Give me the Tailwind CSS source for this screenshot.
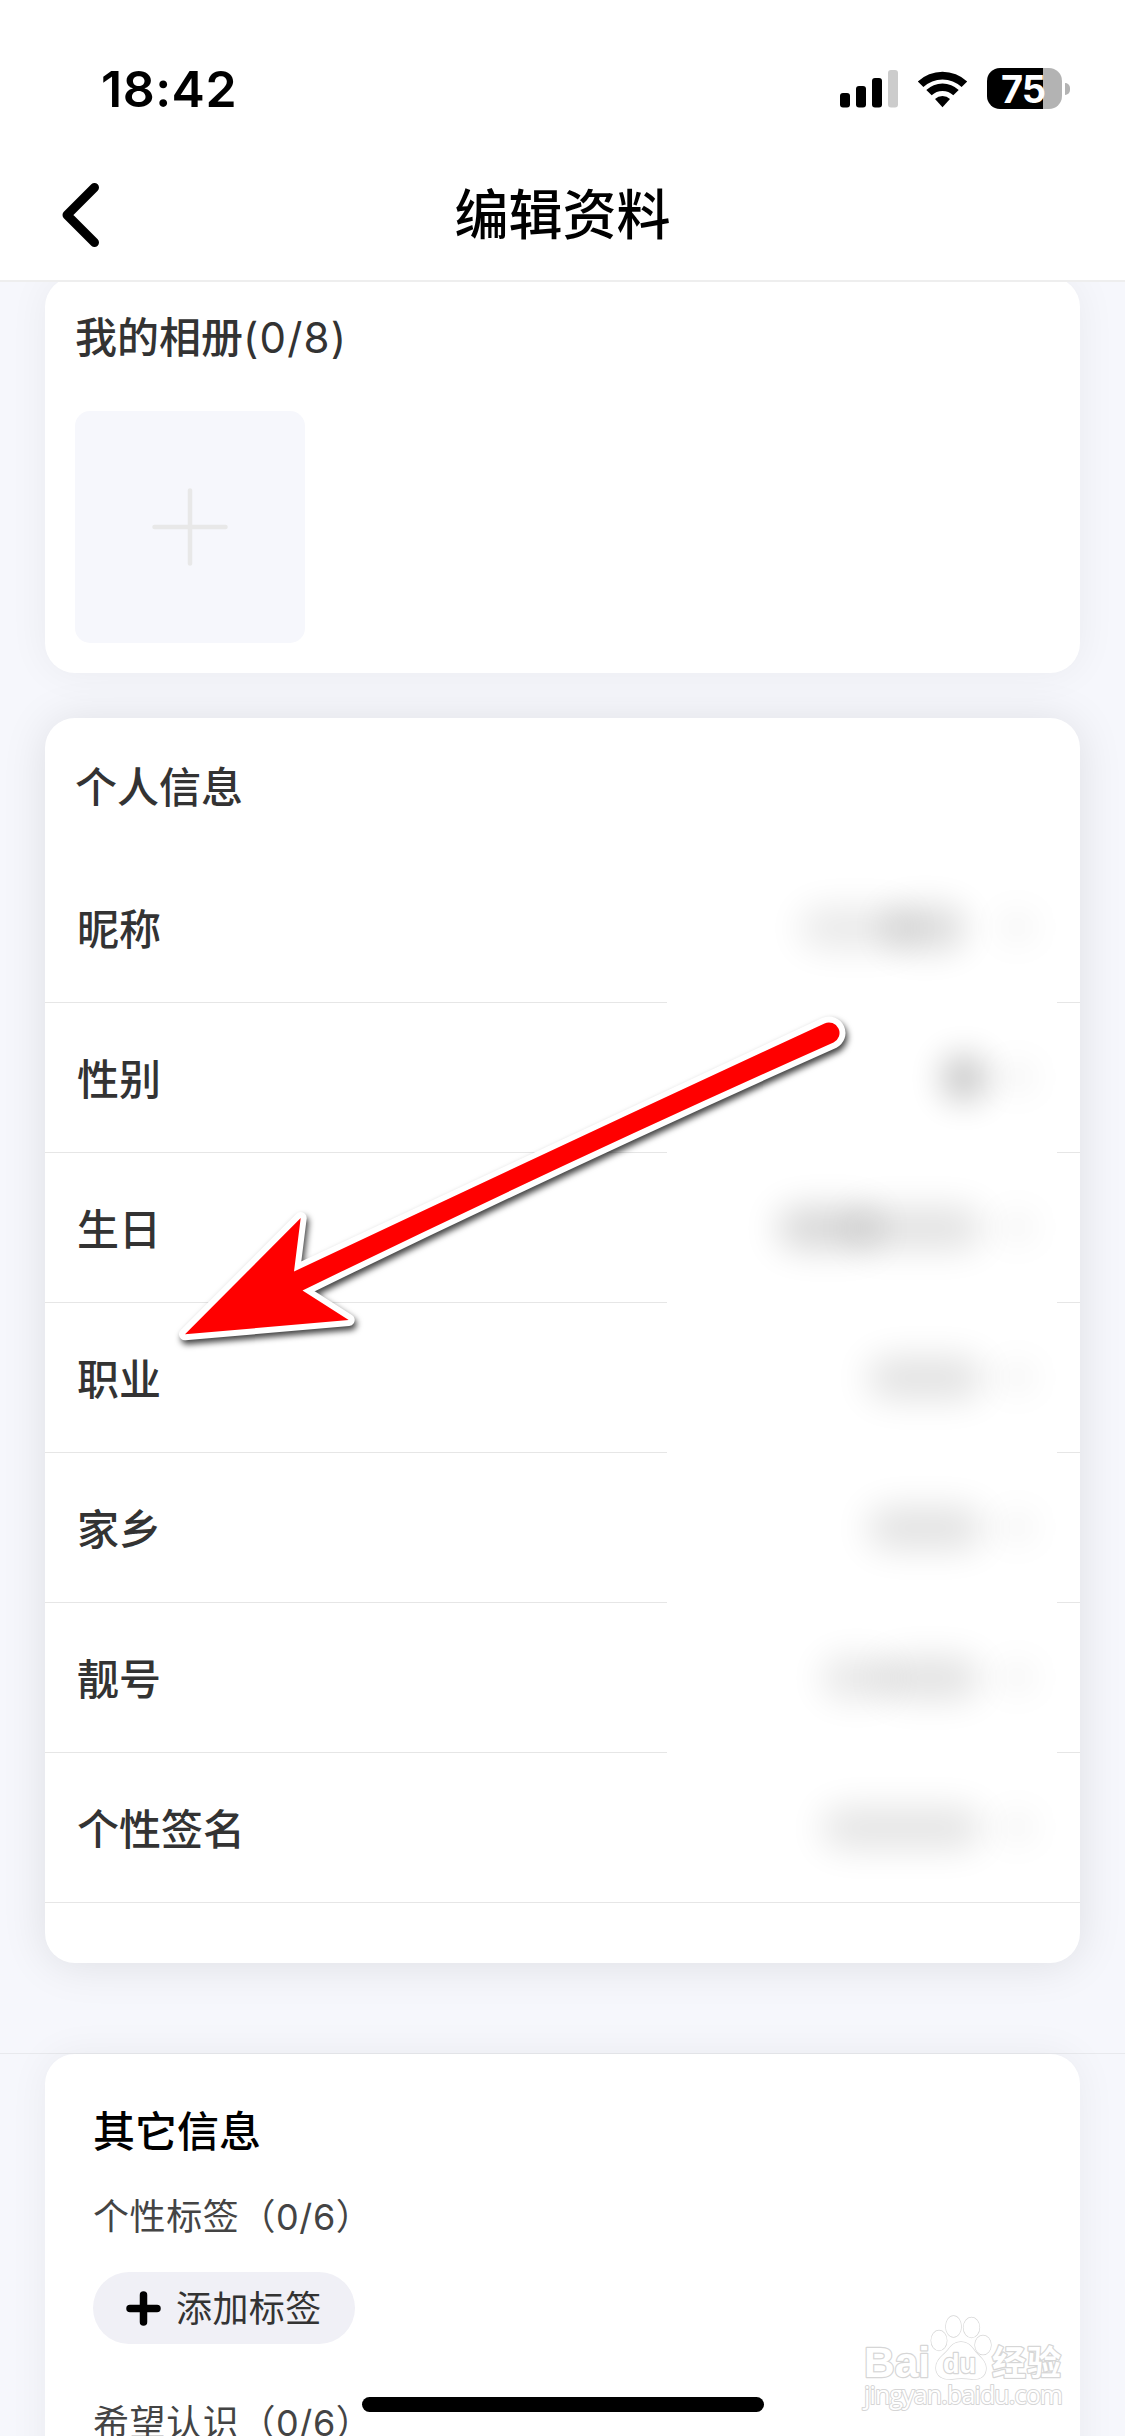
<!DOCTYPE html>
<html lang="zh-CN">
<head>
<meta charset="utf-8">
<title>编辑资料</title>
<script src="https://cdn.jsdelivr.net/npm/@tailwindcss/browser@4"></script>
</head>
<body class="bg-[#f6f7fc]">
<div class="relative flex h-[2436px] w-[1125px] flex-col overflow-hidden bg-[#f6f7fc] font-['Inter','Noto_Sans_CJK_SC',sans-serif] font-medium text-[#333]">

  <header class="relative z-10 flex h-[282px] shrink-0 flex-col border-b-2 border-[#eee] bg-white text-black">
    <!-- status bar -->
    <div class="flex h-[150px] items-center justify-between pt-[27px] pr-[55px] pl-[101px]">
      <div class="text-[50px] leading-none font-semibold tracking-[0.5px]">18:42</div>
      <div class="flex items-center">
        <svg class="h-[38px] w-[58px]" viewBox="0 0 58 38"><rect y="23" width="10" height="14.5" rx="3"/><rect x="16" y="16" width="10" height="21.500" rx="3"/><rect x="32" y="8" width="10" height="29.500" rx="3"/><rect x="48" y="0" width="10" height="37.500" rx="3" fill="#ccc"/></svg>
        <svg class="ml-[19px] h-[38px] w-[51px]" viewBox="0 0 51 38"><path d="M.8 11.500a36 36 0 0 1 49.400 0L44.600 17a28 28 0 0 0-38.200 0z"/><path d="M9.300 20a23.500 23.500 0 0 1 32.400 0l-5.400 5.300a15.800 15.800 0 0 0-21.600 0z"/><path d="M18 29a11 11 0 0 1 15 0l-7.500 8.300z"/></svg>
        <div class="ml-[19px] flex h-[41px] w-[75px] items-center justify-center rounded-[13px] bg-[linear-gradient(90deg,#000_56px,#b3b3b3_56px)] pr-[3px] text-[38px] leading-none font-bold tracking-[-1px] text-white">75</div>
        <div class="ml-[3px] h-[12px] w-[5px] rounded-r-full bg-[#b3b3b3]"></div>
      </div>
    </div>
    <!-- title bar -->
    <div class="grid h-[130px] grid-cols-[1fr_auto_1fr] items-center px-[60px]">
      <svg class="h-[68px] w-[44px]" viewBox="0 0 44 68" fill="none" stroke="#000" stroke-width="9" stroke-linecap="round" stroke-linejoin="round"><path d="M34.500 6.500 7 34l27.500 27.500"/></svg>
      <h1 class="pt-[2px] text-[54px] leading-none">编辑资料</h1>
    </div>
  </header>

  <main class="flex flex-col px-[45px] text-[42px] leading-none">
    <section class="-mt-[5px] flex h-[396px] flex-col rounded-[30px] bg-white px-[30px] pt-[40px] shadow-[0_0_40px_rgba(0,0,0,0.055)]">
      <h2 class="h-[42px]">我的相册<span class="font-normal tracking-[1.2px]">(0/8)</span></h2>
      <div class="mt-[52px] flex h-[232px] w-[230px] items-center justify-center rounded-[15px] bg-[#f6f7fc]">
        <svg class="size-[78px]" viewBox="0 0 78 78" stroke="#e8e8e8" stroke-width="4.500" stroke-linecap="round"><path d="M39 2.500v73M3.500 39h71"/></svg>
      </div>
    </section>

    <section class="mt-[45px] flex h-[1245px] flex-col rounded-[30px] bg-white shadow-[0_2px_45px_rgba(0,0,0,0.1)]">
      <h2 class="h-[135px] px-[30px] pt-[49px]">个人信息</h2>
      <div id="rows" class="flex flex-col"></div>
    </section>
  </main>

  <section class="mt-[90px] border-t border-[#e8e9ed] px-[45px] leading-none">
    <div class="flex h-[440px] flex-col items-start rounded-[30px] bg-white px-[48px] pt-[57px] shadow-[0_0_40px_rgba(0,0,0,0.055)]">
      <h2 class="text-[42px] text-black">其它信息</h2>
      <p class="mt-[46px] text-[36px] font-normal tracking-[0.6px] text-[#444]">个性标签（0/6）</p>
      <button class="mt-[37px] flex h-[72px] w-[262px] items-center rounded-full bg-[#f0f0f6] pt-px pl-[33px] text-[36px] font-normal tracking-[0.4px]">
        <svg class="mr-[15px] size-[35px]" viewBox="0 0 35 35" stroke="#000" stroke-width="7.500" stroke-linecap="round"><path d="M17.500 4v27M4 17.500h27"/></svg>添加标签</button>
      <p class="mt-[61px] text-[36px] font-normal tracking-[0.6px] text-[#444]">希望认识（0/6）</p>
    </div>
  </section>

  <!-- watermark -->
  <svg class="absolute top-[2310px] left-[855px] h-[110px] w-[220px] font-['Liberation_Sans','Noto_Sans_CJK_SC',sans-serif]" viewBox="855 2310 220 110" fill="#fff" stroke="#d6d6d6" stroke-width="2.500" stroke-linejoin="round" paint-order="stroke">
    <text x="864" y="2377" font-size="43" font-weight="700" textLength="66" lengthAdjust="spacingAndGlyphs">Bai</text>
    <g stroke-width="1.300"><ellipse cx="939" cy="2340.500" rx="7.800" ry="10"/><ellipse cx="953.500" cy="2326.500" rx="7.700" ry="10.500"/><ellipse cx="971.500" cy="2327.500" rx="8" ry="10"/><ellipse cx="983" cy="2345" rx="8" ry="9.500"/>
    <path d="M961 2342c7 0 10 4 13 8 4 6 12 10 12 18 0 9-7 12-14 11-7-.8-13-1-20 0-9 1-16-3-16-11 0-9 8-13 12-18 3-4 6-8 13-8z"/></g>
    <text x="943" y="2373" font-size="28" font-weight="700" textLength="33" lengthAdjust="spacingAndGlyphs">du</text>
    <text x="992" y="2375" font-size="34" font-weight="700" textLength="69">经验</text>
    <text x="864" y="2404" font-size="25" stroke-width="2" textLength="199" class="font-['Open_Sans',sans-serif]">jingyan.baidu.com</text>
  </svg>

  <!-- callout arrow -->
  <svg class="absolute top-[1000px] left-[160px] h-[370px] w-[710px] drop-shadow-[2px_4px_3px_rgba(0,0,0,0.75)]" viewBox="160 1000 710 370"><path d="M185 1334.300 300.700 1218 294 1271.500Q560 1146 824.500 1023.500A10.500 10.500 0 0 1 833.500 1042.500Q570 1160 302.500 1290.500L348.700 1320z" fill="red" stroke="#fff" stroke-width="12" stroke-linejoin="round" paint-order="stroke"/></svg>

  <!-- home indicator -->
  <div class="absolute top-[2397px] left-[362px] h-[15px] w-[402px] rounded-full bg-black"></div>
</div>

<script>
  // label, then the smudges of the hidden value: x, width, opacity
  const rows = [
    ['昵称', [[800, 110, .09], [885, 80, .16]]],
    ['性别', [[945, 38, .32]]],
    ['生日', [[778, 100, .17], [850, 132, .12]]],
    ['职业', [[868, 115, .12]]],
    ['家乡', [[868, 115, .12]]],
    ['靓号', [[822, 70, .1], [880, 100, .12]]],
    ['个性签名', [[822, 160, .11]]],
  ];
  document.getElementById('rows').innerHTML = rows.map(([label, blobs], i) => `
    <div class="relative flex h-[150px] flex-col">
      <div class="flex h-[149px] items-center pt-[4px] pl-[32px]">${label}</div>
      <div class="flex h-px justify-between"><i class="${i < 6 ? 'w-[622px]' : 'w-full'} bg-[#e6e6e6]"></i>${i < 6 ? '<i class="w-[23px] bg-[#e6e6e6]"></i>' : ''}</div>
      ${blobs.map(([x, w, o]) => `<span class="absolute top-[55px] h-[40px] rounded-full bg-black blur-[18px]" style="left:${x - 45}px;width:${w}px;opacity:${o}"></span>`).join('')}
      <span class="absolute top-[60px] left-[955px] h-[28px] w-[34px] rounded-full bg-black/5 blur-[16px]"></span>
    </div>`).join('');
</script>
</body>
</html>
